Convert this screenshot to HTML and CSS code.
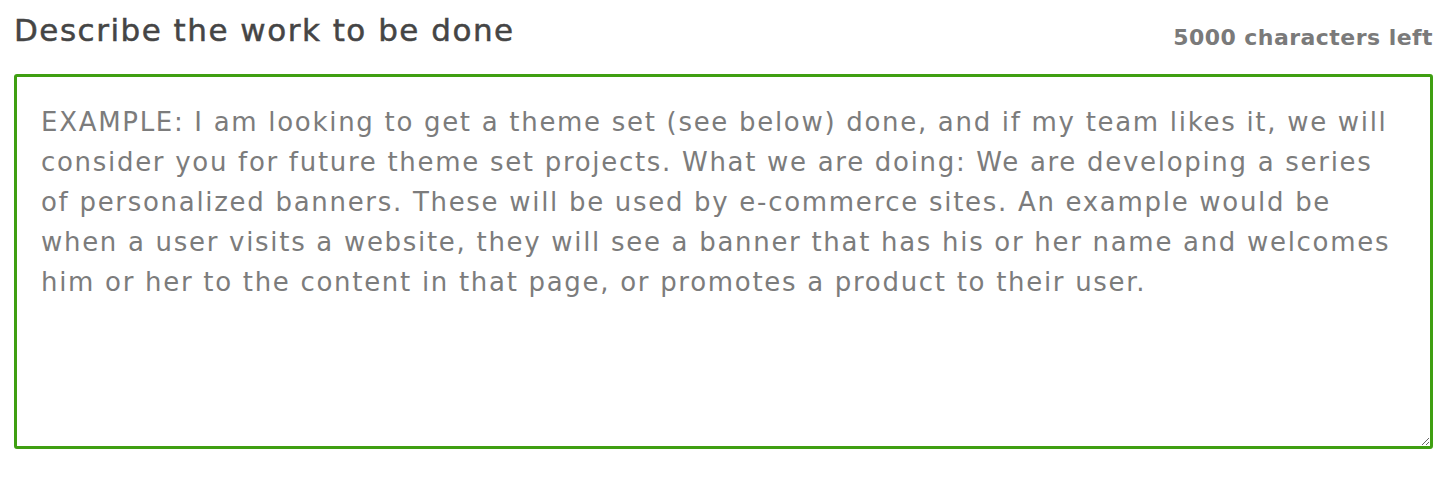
FILE: index.html
```html
<!DOCTYPE html>
<html lang="en">
<head>
<meta charset="utf-8">
<title>Describe the work</title>
<link rel="stylesheet" href="styles.css">
</head>
<body>
<div class="field">
  <div class="field-head">
    <label class="field-label" for="work">Describe the work to be done</label>
    <span class="field-count">5000 characters left</span>
  </div>
  <textarea id="work" class="field-input" placeholder="EXAMPLE: I am looking to get a theme set (see below) done, and if my team likes it, we will&#10;consider you for future theme set projects. What we are doing: We are developing a series&#10;of personalized banners. These will be used by e-commerce sites. An example would be&#10;when a user visits a website, they will see a banner that has his or her name and welcomes&#10;him or her to the content in that page, or promotes a product to their user."></textarea>
</div>
</body>
</html>
```
FILE: styles.css
```css
html, body {
  margin: 0;
  padding: 0;
  background: #ffffff;
}

body {
  font-family: "DejaVu Sans", "Liberation Sans", sans-serif;
}

.field {
  width: 1419px;
  margin-left: 14px;
}

.field-head {
  box-sizing: border-box;
  height: 74px;
  padding-top: 12px;
  display: flex;
  justify-content: space-between;
  align-items: flex-start;
}

.field-label {
  font-size: 31px;
  line-height: 36px;
  letter-spacing: 1.5px;
  color: #454545;
  font-weight: normal;
  -webkit-text-stroke: 0.5px #454545;
}

.field-count {
  margin-top: 13px;
  font-size: 22px;
  line-height: 26px;
  letter-spacing: 0.45px;
  font-weight: bold;
  color: #7a7a7a;
}

.field-input {
  display: block;
  box-sizing: border-box;
  width: 1419px;
  height: 375px;
  margin: 0;
  padding: 25px 20px 25px 24px;
  border: 3px solid #3f9f12;
  border-radius: 3px;
  outline: none;
  font-family: "DejaVu Sans", "Liberation Sans", sans-serif;
  font-size: 26px;
  line-height: 40px;
  letter-spacing: 1.7px;
  color: #555555;
  resize: vertical;
  overflow: hidden;
}

.field-input::placeholder {
  color: #7c7c7c;
  opacity: 1;
}
```
